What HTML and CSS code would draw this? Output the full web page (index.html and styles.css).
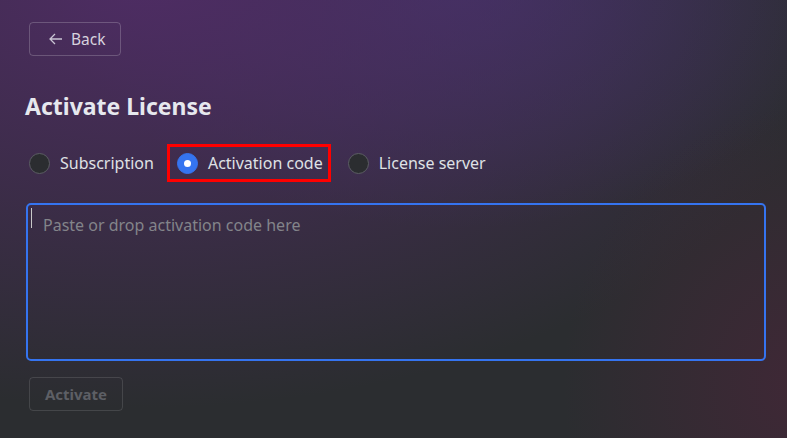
FILE: index.html
```html
<!DOCTYPE html>
<html>
<head>
<meta charset="utf-8">
<link rel="stylesheet" href="styles.css">
</head>
<body>
<div class="page">
  <button class="back"><svg class="arrow" width="14" height="12" viewBox="0 0 14 12"><path d="M6 1 L1 6 L6 11 M1 6 H13" fill="none" stroke="#c9c4d3" stroke-width="1.3"/></svg><span>Back</span></button>
  <h1 class="title">Activate License</h1>
  <div class="options">
    <label class="opt"><span class="radio"></span><span>Subscription</span></label>
    <label class="opt opt-sel"><span class="radio checked"></span><span>Activation code</span></label>
    <label class="opt"><span class="radio"></span><span>License server</span></label>
  </div>
  <div class="area"><span class="caret"></span><span class="ph">Paste or drop activation code here</span></div>
  <button class="activate">Activate</button>
</div>
</body>
</html>
```
FILE: styles.css
```css
html, body { margin: 0; height: 100%; }
body {
  width: 787px; height: 438px; overflow: hidden;
  background:
    radial-gradient(ellipse 240px 280px at 102% 88%, rgba(70,38,56,0.75), rgba(70,38,56,0) 100%),
    radial-gradient(ellipse 720px 430px at 18% -5%, rgba(80,44,102,0.95), rgba(80,44,102,0) 100%),
    radial-gradient(ellipse 400px 250px at 58% -5%, rgba(62,54,108,0.85), rgba(62,54,108,0) 100%),
    #2b2d30;
  font-family: "Noto Sans", "Open Sans", sans-serif;
  color: #dfe1e5;
}
.page { display: flex; flex-direction: column; align-items: flex-start; padding: 22px 21px 0 26px; }
.back {
  margin-left: 3px;
  display: flex; align-items: center; gap: 8px;
  height: 34px; width: 92px; padding: 0 0 0 19px; box-sizing: border-box;
  background: transparent; border: 1px solid rgba(255,255,255,0.2); border-radius: 4px;
  color: #d7d2de; font-family: inherit; font-size: 15.5px;
}
.arrow { display: block; }
.title { margin: 34px 0 0 -1px; font-size: 23px; font-weight: 700; line-height: 32px; color: #e6e8ee; }
.options { display: flex; align-items: center; margin-top: 22px; margin-left: 3px; }
.opt { display: flex; align-items: center; gap: 10px; font-size: 16px; color: #dfe1e5; height: 32px; }
.opt-sel { border: 3px solid #ff0000; height: 32px; padding: 0 5px 0 7px; margin-left: 13px; }
.opt-sel + .opt { margin-left: 17px; }
.radio { width: 19px; height: 19px; border-radius: 50%; border: 1px solid #5b5d63; background: #2b2d30; box-sizing: content-box; }
.radio.checked { background: #3574f0; border-color: #3574f0; position: relative; }
.radio.checked::after { content: ""; position: absolute; left: 6.5px; top: 6.5px; width: 7px; height: 7px; border-radius: 50%; background: #fff; }
.area {
  margin-top: 21px; width: 740px; height: 158px; box-sizing: border-box;
  border: 2px solid #3574f0; border-radius: 5px; padding: 3px 0 0 3px;
  display: flex; align-items: flex-start;
}
.caret { width: 1px; height: 20px; background: #c8c8c8; margin-top: 0; }
.ph { margin-left: 11px; margin-top: 7px; font-size: 16px; line-height: 20px; color: #83848a; }
.activate {
  margin-top: 16px; margin-left: 3px; width: 94px; height: 34px;
  background: transparent; border: 1px solid rgba(255,255,255,0.12); border-radius: 4px;
  color: #5d5f65; font-family: inherit; font-weight: 700; font-size: 15px;
}
```
